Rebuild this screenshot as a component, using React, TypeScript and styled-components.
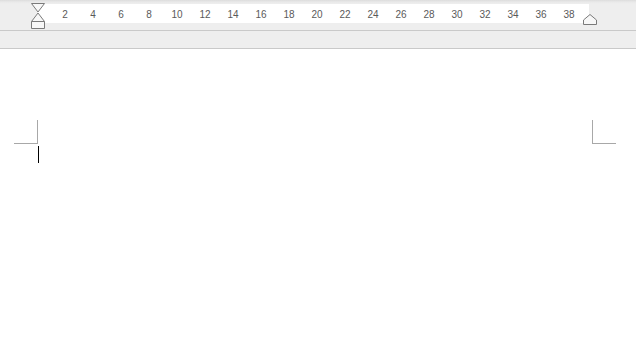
import React from "react";
import styled, { createGlobalStyle } from "styled-components";

const GlobalStyle = createGlobalStyle`
  html, body {
    margin: 0;
    padding: 0;
    background: #ffffff;
    font-family: "Liberation Sans", Arial, sans-serif;
  }
`;

const Root = styled.div`
  width: 636px;
  height: 344px;
  overflow: hidden;
  display: flex;
  flex-direction: column;
  background: #ffffff;
`;

const RulerBar = styled.div`
  position: relative;
  height: 31px;
  flex: none;
  padding-top: 4px;
  box-sizing: border-box;
  background: linear-gradient(180deg, #dcdcdc 0px, #e9e9e9 2px, #eeeeee 4px);
  border-bottom: 1px solid #c9c9c9;
`;

const RulerTrack = styled.div`
  margin-left: 38px;
  width: 551px;
  height: 19px;
  background: #ffffff;
  display: flex;
  align-items: center;
  padding-left: 13px;
  box-sizing: border-box;
`;

const Tick = styled.span`
  width: 28px;
  flex: none;
  text-align: center;
  font-size: 10px;
  color: #5a5a5a;
  line-height: 1;
  padding-top: 3px;
`;

const Marker = styled.svg<{ $left: number; $top: number }>`
  position: absolute;
  left: ${(p) => p.$left}px;
  top: ${(p) => p.$top}px;
  overflow: visible;
`;

const SubBar = styled.div`
  height: 17px;
  flex: none;
  background: #eeeeee;
  border-bottom: 1px solid #c9c9c9;
`;

const Page = styled.div`
  flex: 1;
  display: flex;
  justify-content: space-between;
  align-items: flex-start;
  padding: 71px 20px 0 14px;
`;

const LeftMargin = styled.div`
  display: flex;
  flex-direction: column;
`;

const CornerMark = styled.div<{ $side: "left" | "right" }>`
  width: 23px;
  height: 23px;
  border-bottom: 1px solid #a8a8a8;
  ${(p) =>
    p.$side === "left"
      ? "border-right: 1px solid #a8a8a8;"
      : "border-left: 1px solid #a8a8a8;"}
`;

const Caret = styled.div`
  width: 1px;
  height: 17px;
  margin: 2px 0 0 24px;
  background: #000000;
`;

const ticks = Array.from({ length: 19 }, (_, i) => (i + 1) * 2);

const App = () => (
  <Root>
    <GlobalStyle />
    <RulerBar>
      <RulerTrack>
        {ticks.map((t) => (
          <Tick key={t}>{t}</Tick>
        ))}
      </RulerTrack>
      <Marker $left={31} $top={3} width={14} height={27} viewBox="0 0 14 27">
        <path
          d="M0.5 0.5 H13.5 L7 9 Z"
          fill="#f7f7f7"
          stroke="#7a7a7a"
          strokeWidth={1}
        />
        <path
          d="M7 10 L13.5 18.5 V25.5 H0.5 V18.5 Z"
          fill="#f7f7f7"
          stroke="#7a7a7a"
          strokeWidth={1}
        />
        <path d="M0.5 18.5 H13.5" stroke="#7a7a7a" strokeWidth={1} />
      </Marker>
      <Marker $left={583} $top={14} width={14} height={11} viewBox="0 0 14 11">
        <path
          d="M7 0.5 L13.5 6 V10.5 H0.5 V6 Z"
          fill="#f7f7f7"
          stroke="#7a7a7a"
          strokeWidth={1}
        />
      </Marker>
    </RulerBar>
    <SubBar />
    <Page>
      <LeftMargin>
        <CornerMark $side="left" />
        <Caret />
      </LeftMargin>
      <CornerMark $side="right" />
    </Page>
  </Root>
);

export default App;
